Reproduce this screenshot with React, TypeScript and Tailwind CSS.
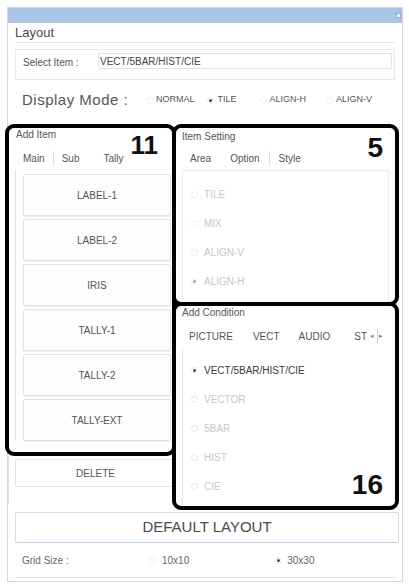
import React from "react";

const font = { fontFamily: '"Liberation Sans", Arial, sans-serif' };

function Radio({ on, dim }: { on?: boolean; dim?: boolean }) {
  return (
    <span
      className={`inline-flex h-[7px] w-[7px] shrink-0 items-center justify-center rounded-full border ${
        dim ? "border-[#efefef]" : "border-[#e8e8e8]"
      }`}
    >
      {on && <span className={`h-[3px] w-[3px] rounded-full ${dim ? "bg-[#aaa]" : "bg-[#444]"}`} />}
    </span>
  );
}

function Option({ label, on, dim }: { label: string; on?: boolean; dim?: boolean }) {
  return (
    <div className="flex h-[29px] items-center gap-[6px] pl-[8px]">
      <Radio on={on} dim={dim} />
      <span className={`text-[10px] ${on && !dim ? "text-[#3a3a3a]" : "text-[#c8c8c8]"}`}>{label}</span>
    </div>
  );
}

const itemButtons = ["LABEL-1", "LABEL-2", "IRIS", "TALLY-1", "TALLY-2", "TALLY-EXT"];

export default function App() {
  return (
    <div className="h-[587px] w-[409px] overflow-hidden bg-white pl-[7px] pt-[7px]" style={font}>
      <div className="relative h-[575px] w-[396px] border border-[#d6d6d6] bg-white">
        {/* title bar */}
        <div className="flex h-[15px] items-center bg-[#a9c5e8] pr-[1px]">
          <span className="ml-auto h-[5px] w-[5px] border border-[#8eb0da] bg-[#e8f0fa]" />
        </div>

        <div className="px-[7px]">
          <div className="flex h-[20px] items-center border-b border-[#e6e6e6] text-[13px] text-[#4a4a4a]">
            Layout
          </div>

          {/* select item */}
          <div className="mt-[6px] flex h-[31px] items-start border border-[#e8e8e8] pl-[7px] pt-[3px]">
            <span className="mt-[2px] w-[75px] text-[10px] text-[#555]">Select Item :</span>
            <div className="mr-[2px] flex h-[16px] flex-1 items-center border border-[#e4e4e4] pl-[1px] text-[10px] text-[#444]">
              VECT/5BAR/HIST/CIE
            </div>
          </div>

          {/* display mode */}
          <div className="mt-[8px] flex h-[24px] items-center pl-[7px]">
            <span className="w-[124px] text-[15px] tracking-[0.5px] text-[#555]">Display Mode :</span>
            <div className="flex items-center gap-[3px]">
              <Radio dim />
              <span className="text-[9px] text-[#555]">NORMAL</span>
            </div>
            <div className="ml-[12px] flex items-center gap-[4px]">
              <Radio on />
              <span className="text-[9px] text-[#555]">TILE</span>
            </div>
            <div className="ml-[23px] flex items-center gap-[3px]">
              <Radio dim />
              <span className="text-[9px] text-[#555]">ALIGN-H</span>
            </div>
            <div className="ml-[20px] flex items-center gap-[3px]">
              <Radio dim />
              <span className="text-[9px] text-[#555]">ALIGN-V</span>
            </div>
          </div>

          {/* main area */}
          <div className="-ml-[10px] mt-[12px] flex">
            {/* left column */}
            <div className="w-[171px] shrink-0">
              <div className="relative h-[332px] rounded-[9px] border-4 border-black">
                <div className="pl-[7px] pt-[1px] text-[10px] leading-[12px] text-[#555]">Add Item</div>
                <span className="absolute right-[14px] top-[4px] text-[26px] font-bold leading-none text-[#111]">
                  11
                </span>
                <div className="mt-[9px] flex h-[16px] items-center pl-[14px] text-[10px] text-[#555]">
                  <span>Main</span>
                  <span className="mx-[8px] h-[14px] border-l border-[#dedede]" />
                  <span>Sub</span>
                  <span className="ml-[24px]">Tally</span>
                </div>
                <div className="ml-[6px] mt-[4px] flex flex-col gap-[3px] border-l border-[#e2e2e2] pl-[7px] pr-[1px] pt-[4px]">
                  {itemButtons.map((b) => (
                    <div
                      key={b}
                      className="flex h-[42px] items-center justify-center rounded-[2px] border border-[#e3e3e3] bg-[#fdfdfd] text-[10px] text-[#555] shadow-[0_1px_0_#eeeeee]"
                    >
                      {b}
                    </div>
                  ))}
                </div>
              </div>
              <div className="ml-[3px] h-[48px] border-l border-[#e0e0e0] pl-[6px] pt-[3px]">
                <div className="flex h-[28px] items-center justify-center rounded-[2px] border border-[#e3e3e3] text-[10px] text-[#555]">
                  DELETE
                </div>
              </div>
            </div>

            {/* right column */}
            <div className="-ml-[4px] w-[227px] shrink-0">
              <div className="relative h-[182px] rounded-[9px] border-4 border-black">
                <div className="pl-[6px] pt-[3px] text-[10px] leading-[12px] text-[#555]">Item Setting</div>
                <span className="absolute right-[12px] top-[6px] text-[28px] font-bold leading-none text-[#111]">
                  5
                </span>
                <div className="mt-[7px] flex h-[16px] items-center pl-[14px] text-[10px] text-[#555]">
                  <span>Area</span>
                  <span className="ml-[19px]">Option</span>
                  <span className="mx-[9px] h-[14px] border-l border-[#dedede]" />
                  <span>Style</span>
                </div>
                <div className="mx-[6px] mt-[4px] h-[134px] border border-[#ececec] pt-[9px]">
                  <Option label="TILE" dim />
                  <Option label="MIX" dim />
                  <Option label="ALIGN-V" dim />
                  <Option label="ALIGN-H" on dim />
                </div>
              </div>

              <div className="relative -mt-[4px] h-[208px] rounded-[9px] border-4 border-black">
                <div className="pl-[6px] pt-[1px] text-[10px] leading-[12px] text-[#555]">Add Condition</div>
                <div className="mt-[9px] flex h-[16px] items-center pl-[13px] text-[10px] text-[#555]">
                  <span>PICTURE</span>
                  <span className="ml-[20px]">VECT</span>
                  <span className="ml-[19px]">AUDIO</span>
                  <span className="ml-[24px]">ST</span>
                  <span className="ml-[3px] text-[7px] text-[#888]">◂</span>
                  <span className="ml-[3px] flex h-[14px] w-[7px] items-center justify-center border-l border-[#d0d0d0] text-[7px] text-[#888]">
                    ▸
                  </span>
                </div>
                <div className="mx-[6px] mt-[4px] h-[158px] border-l border-[#e6e6e6] pt-[8px]">
                  <Option label="VECT/5BAR/HIST/CIE" on />
                  <Option label="VECTOR" />
                  <Option label="5BAR" />
                  <Option label="HIST" />
                  <Option label="CIE" />
                </div>
                <span className="absolute bottom-[7px] right-[12px] text-[28px] font-bold leading-none text-[#111]">
                  16
                </span>
              </div>
            </div>
          </div>

          {/* default layout */}
          <div className="-mr-[4px] mt-[2px] flex h-[31px] items-center justify-center rounded-[2px] border border-[#dcdcdc] border-b-[#b9cde6] text-[15px] text-[#4a4a4a]">
            DEFAULT LAYOUT
          </div>

          {/* grid size */}
          <div className="flex h-[35px] items-center border-b border-[#e4e4e4] pl-[7px] text-[10px] text-[#666]">
            <span className="w-[127px]">Grid Size :</span>
            <div className="flex items-center gap-[6px]">
              <Radio dim />
              <span>10x10</span>
            </div>
            <div className="ml-[86px] flex items-center gap-[5px]">
              <Radio on />
              <span>30x30</span>
            </div>
          </div>
        </div>
      </div>
    </div>
  );
}
